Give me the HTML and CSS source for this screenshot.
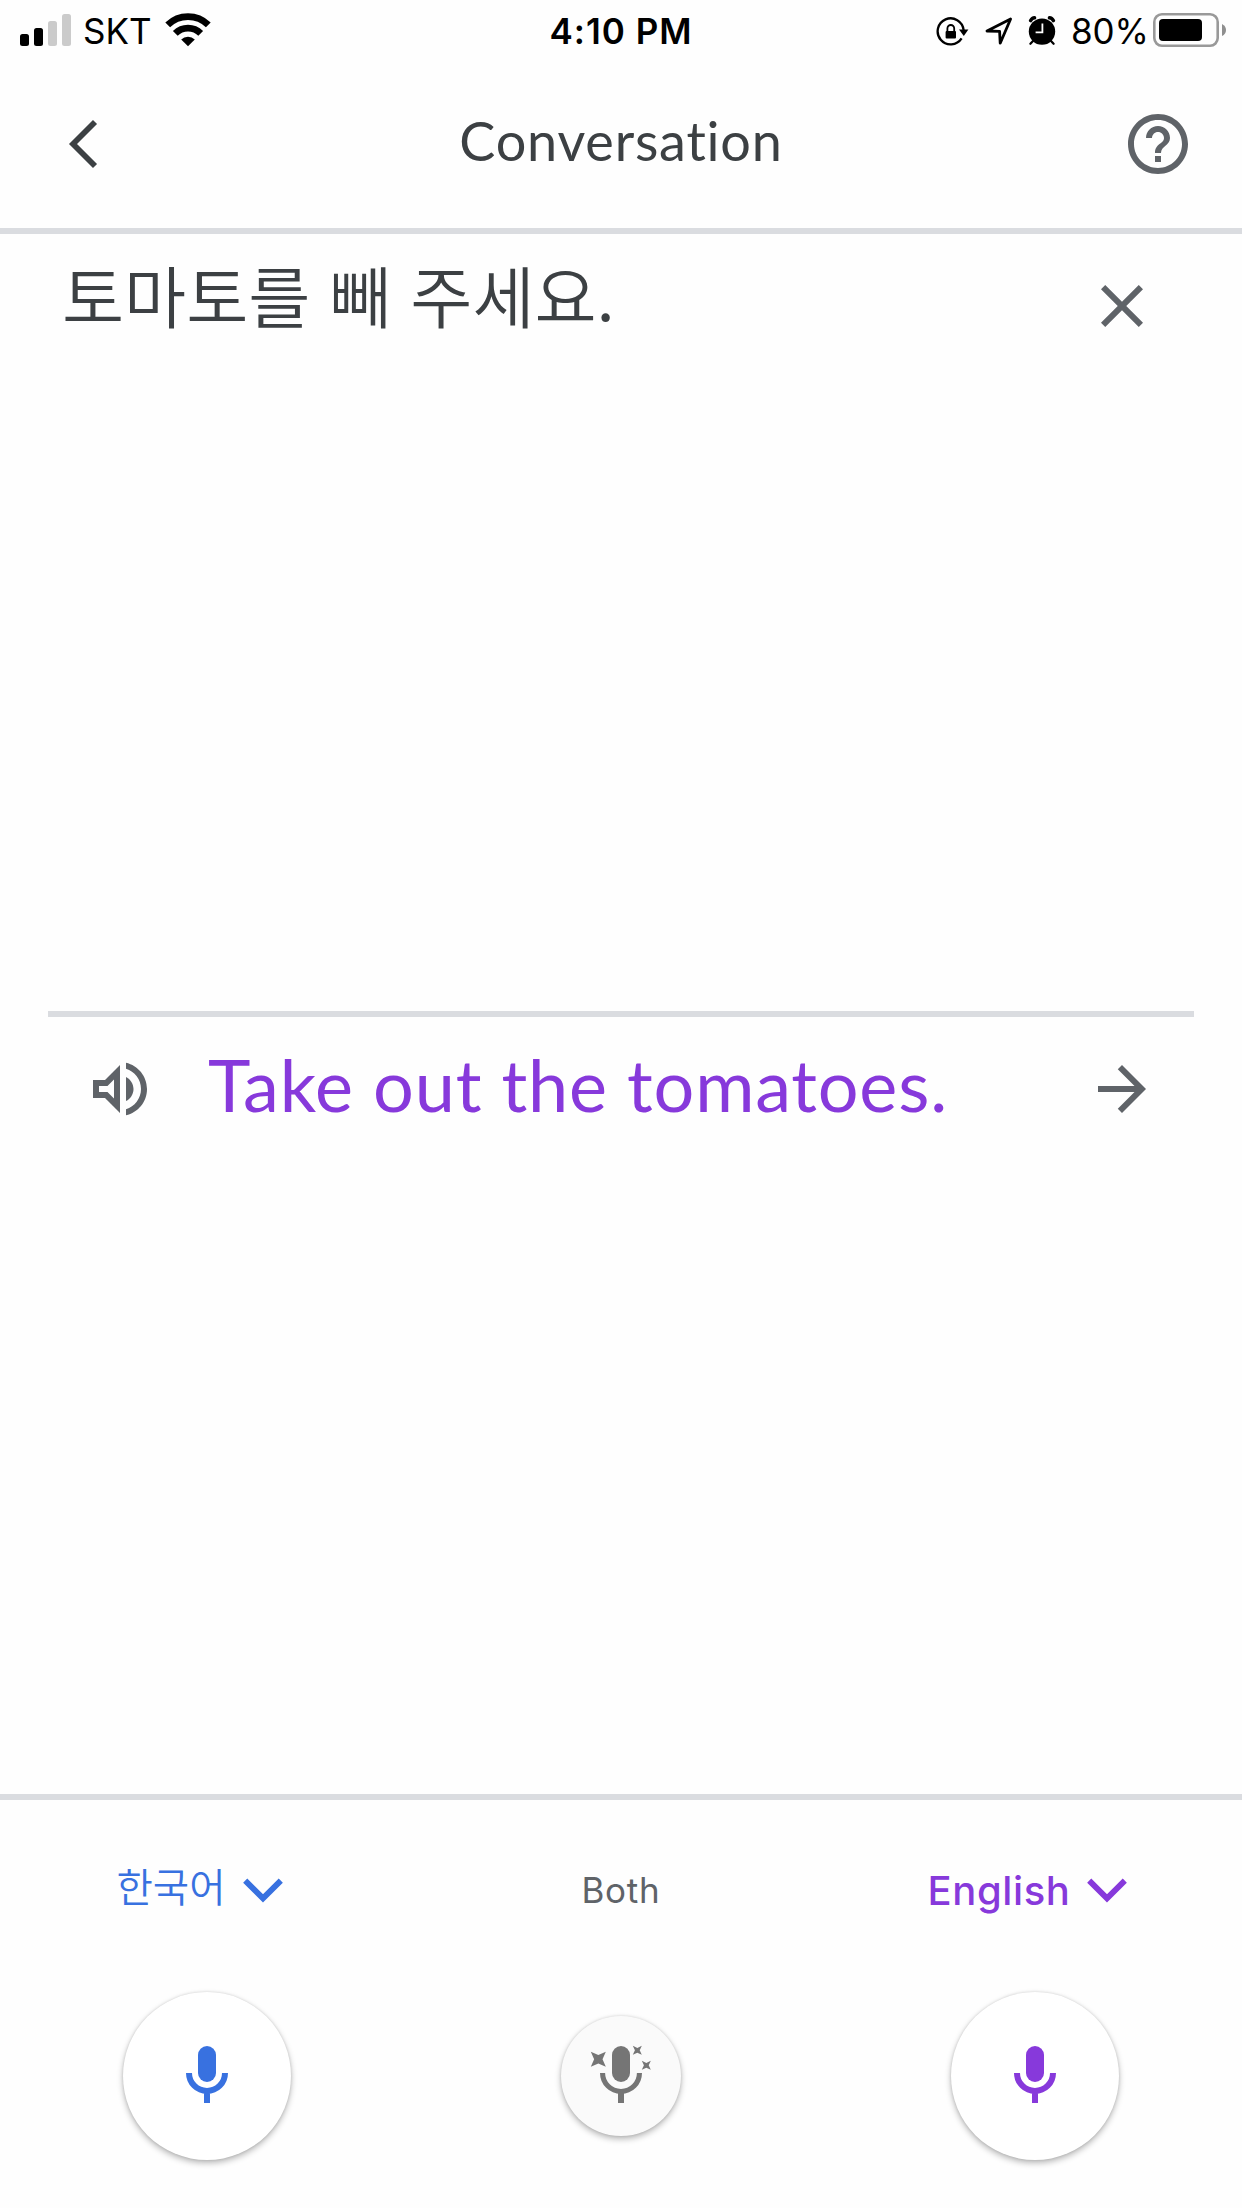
FILE: index.html
```html
<!DOCTYPE html>
<html lang="en">
<head>
<meta charset="UTF-8" />
<meta name="viewport" content="width=device-width, initial-scale=1" />
<title>Conversation</title>
<link rel="stylesheet" href="styles.css">
</head>
<body>
<div class="screen">
  <div class="status-bar">
    <div class="status-left">
      <svg class="signal" width="51" height="32" viewBox="0 0 51 32">
        <rect x="0" y="20" width="9" height="12" rx="2.5"/>
        <rect x="14" y="14" width="9" height="18" rx="2.5"/>
        <rect class="off" x="28" y="7" width="9" height="25" rx="2.5"/>
        <rect class="off" x="42" y="0" width="9" height="32" rx="2.5"/>
      </svg>
      <span class="carrier">SKT</span>
      <svg class="wifi" width="46" height="34" viewBox="0 0 46 34">
        <g fill="none" stroke="#000" stroke-width="6.8">
          <path d="M2.7 11.9a29 29 0 0 1 40.6 0"/>
          <path d="M10.3 20.4a18 18 0 0 1 25.4 0"/>
        </g>
        <path d="M23 33.2l-6.8-6.6a9.6 9.6 0 0 1 13.6 0z"/>
      </svg>
    </div>
    <div class="time">4:10 PM</div>
    <div class="status-right">
      <svg class="lock" width="33" height="30" viewBox="0 0 33 30">
        <g fill="none" stroke="#000" stroke-width="2.3">
          <path d="M25.6 21.4A13 13 0 1 1 27.6 13"/>
          <path stroke-width="1.8" d="M11.4 15v-3.6a3.4 3.4 0 0 1 6.8 0V15"/>
        </g>
        <path d="M23 12.5h9.4l-4.6 6.4z"/>
        <rect x="9.6" y="14" width="10.4" height="7.6" rx="1"/>
      </svg>
      <svg class="location" width="28" height="28" viewBox="0 0 28 28">
        <path fill="none" stroke="#000" stroke-width="2.8" stroke-linejoin="round" d="M25.6 2L2 14l12.6.4.6 11.8z"/>
      </svg>
      <svg class="alarm" width="28" height="29" viewBox="0 0 28 29">
        <circle cx="14" cy="15.6" r="13.2"/>
        <g fill="none" stroke="#000" stroke-width="3.4" stroke-linecap="round">
          <path d="M2.6 4.6Q4 2 6.6 1.8M25.4 4.6Q24 2 21.4 1.8"/>
          <path stroke-width="2.2" d="M5 25l-2.6 2.8M23 25l2.6 2.8"/>
        </g>
        <path fill="none" stroke="#fff" stroke-width="1.8" d="M14.4 7.4v9H7.6"/>
      </svg>
      <span class="percent">80%</span>
      <svg class="battery" width="74" height="34" viewBox="0 0 74 34">
        <rect x="1.3" y="1.3" width="63.4" height="31.4" rx="7.6" fill="none" stroke="#999" stroke-width="2.6"/>
        <rect x="6" y="6" width="43" height="22" rx="4"/>
        <path fill="#8f8f8f" d="M69 11q4 2 4 6t-4 6z"/>
      </svg>
    </div>
  </div>

  <div class="header">
    <svg class="back" width="30" height="48" viewBox="0 0 30 48">
      <path fill="none" stroke="#3c4043" stroke-width="5.7" d="M27 2L5 24l22 22"/>
    </svg>
    <h1>Conversation</h1>
    <svg class="icon" viewBox="0 0 24 24">
      <path d="M11 18h2v-2h-2v2zm1-16C6.48 2 2 6.48 2 12s4.48 10 10 10 10-4.48 10-10S17.52 2 12 2zm0 18c-4.41 0-8-3.59-8-8s3.59-8 8-8 8 3.59 8 8-3.59 8-8 8zm0-14c-2.21 0-4 1.79-4 4h2c0-1.1.9-2 2-2s2 .9 2 2c0 2-3 1.75-3 5h2c0-2.25 3-2.5 3-5 0-2.21-1.79-4-4-4z"/>
    </svg>
  </div>

  <div class="source">
    <p class="source-text" lang="ko">토마토를 빼 주세요.</p>
    <svg class="icon" viewBox="0 0 24 24">
      <path d="M19 6.41L17.59 5 12 10.59 6.41 5 5 6.41 10.59 12 5 17.59 6.41 19 12 13.41 17.59 19 19 17.59 13.41 12z"/>
    </svg>
  </div>

  <div class="result">
    <svg class="icon" viewBox="0 0 24 24">
      <path d="M3 9v6h4l5 5V4L7 9H3zm7-.17v6.34L7.83 13H5v-2h2.83L10 8.83zM16.5 12c0-1.77-1.02-3.29-2.5-4.03v8.05c1.48-.73 2.5-2.25 2.5-4.02zM14 3.23v2.06c2.89.86 5 3.54 5 6.71s-2.11 5.85-5 6.71v2.06c4.01-.91 7-4.49 7-8.77s-2.99-7.86-7-8.77z"/>
    </svg>
    <p class="result-text">Take out the tomatoes.</p>
    <svg class="icon" viewBox="0 0 24 24">
      <path d="M12 4l-1.41 1.41L16.17 11H4v2h12.17l-5.58 5.59L12 20l8-8z"/>
    </svg>
  </div>

  <div class="controls">
    <div class="control blue">
      <div class="label has-menu">
        <span class="lang-ko" lang="ko">한국어</span>
        <svg class="chevron" width="40" height="25" viewBox="0 0 40 25">
          <path d="M2.2 2.6L20 20.4 37.8 2.6"/>
        </svg>
      </div>
      <div class="mic">
        <svg class="icon" viewBox="0 0 24 24">
          <rect x="9" y="2" width="6" height="12" rx="3"/>
          <path class="stand" d="M6 11a6 6 0 0 0 12 0M12 17v4"/>
        </svg>
      </div>
    </div>
    <div class="control">
      <div class="label"><span class="both">Both</span></div>
      <div class="mic mic-auto">
        <svg class="icon" viewBox="0 0 24 24">
          <rect x="9" y="2" width="6" height="12" rx="3"/>
          <path class="stand thin" d="M5.85 11a6.15 6.15 0 0 0 12.3 0"/>
          <path class="stand" d="M12 17v4"/>
          <path d="M1.94 3.94l2.5 1.1 2.5-1.1-1.1 2.5 1.1 2.5-2.5-1.1-2.5 1.1 1.1-2.5z"/>
          <path d="M15.94 1.94l1.5.7 1.5-.7-.7 1.5.7 1.5-1.5-.7-1.5.7.7-1.5z"/>
          <path d="M18.94 6.94l1.5.7 1.5-.7-.7 1.5.7 1.5-1.5-.7-1.5.7.7-1.5z"/>
        </svg>
      </div>
    </div>
    <div class="control purple">
      <div class="label has-menu">
        <span class="lang-en">English</span>
        <svg class="chevron" width="40" height="25" viewBox="0 0 40 25">
          <path d="M2.2 2.6L20 20.4 37.8 2.6"/>
        </svg>
      </div>
      <div class="mic">
        <svg class="icon" viewBox="0 0 24 24">
          <rect x="9" y="2" width="6" height="12" rx="3"/>
          <path class="stand" d="M6 11a6 6 0 0 0 12 0M12 17v4"/>
        </svg>
      </div>
    </div>
  </div>
</div>
</body>
</html>
```
FILE: styles.css
```css
* {
  box-sizing: border-box;
}
body {
  margin: 0;
  background-color: #fefefe;
  color: #3c4043;
  font-family: Inter, "Noto Sans CJK KR", sans-serif;
}
h1, p {
  margin: 0;
  font-weight: 400;
}
svg {
  display: block;
  flex: none;
}
.screen {
  width: 1242px;
  height: 2208px;
  display: flex;
  flex-direction: column;
  overflow: hidden;
}

/* status bar */
.status-bar {
  height: 60px;
  display: grid;
  grid-template-columns: 1fr auto 1fr;
  padding: 0 15px;
  color: #000;
  font-size: 35px;
  line-height: 63px;
  white-space: nowrap;
}
.status-left, .status-right {
  display: flex;
  align-items: flex-start;
}
.status-right {
  justify-content: flex-end;
}
.signal {
  margin: 14px 0 0 5px;
}
.signal .off {
  fill: #cbcbcb;
}
.carrier {
  margin-left: 12px;
}
.wifi {
  margin: 13px 0 0 13px;
}
.time {
  font-weight: 600;
  letter-spacing: 1px;
}
.lock {
  margin: 17px 16px 0 0;
}
.location {
  margin: 17px 15px 0 0;
}
.alarm {
  margin: 16px 15px 0 0;
}
.battery {
  margin: 13px 0 0 4px;
}

/* header */
.header {
  height: 174px;
  display: flex;
  align-items: flex-start;
  justify-content: space-between;
  padding: 48px 48px 0 68px;
  border-bottom: 6px solid #dadce0;
}
.header .back {
  margin: 12px 22px 0 0;
}
.header h1 {
  font-family: Lato, sans-serif;
  font-size: 54px;
  line-height: 66px;
  letter-spacing: 0.8px;
}
.icon {
  width: 72px;
  height: 72px;
  fill: #5f6368;
}

/* source and translation */
.source {
  height: 777px;
  display: flex;
  justify-content: space-between;
  align-items: flex-start;
  padding: 36px 84px 0 62px;
}
.source-text {
  font-family: "Noto Sans CJK KR", sans-serif;
  font-size: 67.5px;
  font-weight: 350;
  line-height: 48px;
}
.result {
  height: 783px;
  display: flex;
  align-items: flex-start;
  margin: 0 48px;
  padding: 36px 36px 0;
  border-top: 6px solid #dadce0;
}
.result-text {
  flex: 1;
  padding-left: 52px;
  font-family: Lato, sans-serif;
  font-size: 72px;
  line-height: 63px;
  letter-spacing: 0.8px;
  color: #8739db;
}

/* language and mic buttons */
.controls {
  height: 414px;
  display: grid;
  grid-template-columns: repeat(3, 1fr);
  border-top: 6px solid #dadce0;
}
.control {
  display: flex;
  flex-direction: column;
  align-items: center;
  color: #5f6368;
}
.control.blue {
  color: #3871e0;
}
.control.purple {
  color: #8739db;
}
.label {
  height: 192px;
  display: flex;
  align-items: flex-start;
  padding-top: 66px;
  line-height: 48px;
}
.has-menu {
  padding-right: 15px;
}
.lang-ko {
  font-family: "Noto Sans CJK KR", sans-serif;
  font-size: 39.5px;
  font-weight: 350;
  line-height: 38px;
}
.both {
  font-size: 35px;
  letter-spacing: 0.8px;
}
.lang-en {
  font-size: 40px;
  font-weight: 500;
  line-height: 49px;
  letter-spacing: 0.6px;
}
.chevron {
  margin: 12px 0 0 17px;
}
.chevron path {
  fill: none;
  stroke: currentColor;
  stroke-width: 5.8;
}
.mic {
  width: 168px;
  height: 168px;
  display: flex;
  align-items: center;
  justify-content: center;
  border-radius: 50%;
  background-color: #fff;
  box-shadow: 0 3px 6px rgba(0,0,0,0.28), 0 0 3px rgba(0,0,0,0.12);
}
.mic .icon {
  fill: currentColor;
}
.mic .stand {
  fill: none;
  stroke: currentColor;
  stroke-width: 2;
}
.mic .thin {
  stroke-width: 1.7;
}
.mic-auto {
  width: 120px;
  height: 120px;
  margin-top: 24px;
  background-color: #fafafa;
  color: #757575;
}
```
